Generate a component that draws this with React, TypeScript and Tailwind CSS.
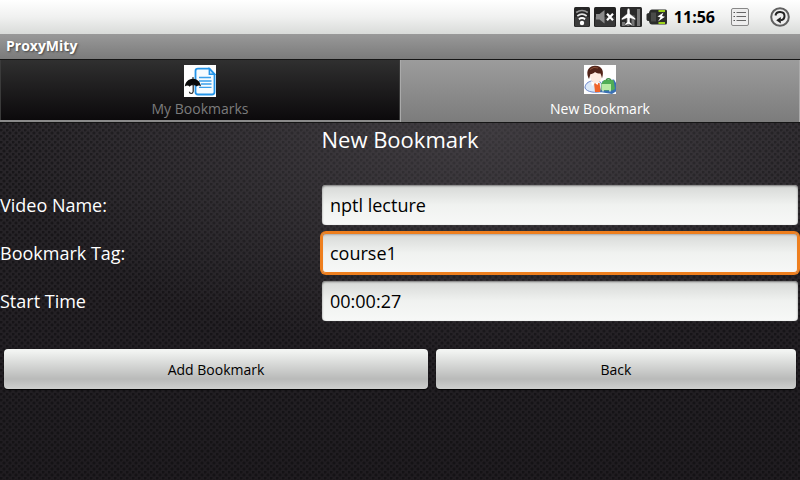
import React, { useState } from "react";

function WifiIcon() {
  return (
    <svg width="16" height="20" viewBox="0 0 16 20" aria-hidden="true">
      <rect width="16" height="20" rx="1.5" fill="#252525" />
      <path d="M1 10h14v8.500a1 1 0 0 1-1 1H2a1 1 0 0 1-1-1z" fill="#3c3c3c" />
      <path d="M2.200 5.500q5.800-4 11.600 0" fill="none" stroke="#969696" strokeWidth="1.700" />
      <path d="M3.300 8.900q4.700-3.400 9.400 0" fill="none" stroke="#e4e4e4" strokeWidth="1.800" />
      <path d="M4.900 12.200q3.100-2.400 6.200 0" fill="none" stroke="#fff" strokeWidth="1.800" />
      <circle cx="8" cy="16" r="2.200" fill="#fff" />
    </svg>
  );
}

function MuteIcon() {
  return (
    <svg width="22" height="20" viewBox="0 0 22 20" aria-hidden="true">
      <rect width="22" height="20" rx="1.500" fill="#222" />
      <path d="M1 10h20v8.500a1 1 0 0 1-1 1H2a1 1 0 0 1-1-1z" fill="#383838" />
      <path d="M2 7h3.500L10.500 3v13.500l-5-4H2z" fill="#8b8b8b" />
      <path d="M13 6.800l6 6.400M19 6.800l-6 6.400" stroke="#fff" strokeWidth="2.200" />
    </svg>
  );
}

function AirplaneIcon() {
  return (
    <svg width="22" height="20" viewBox="0 0 22 20" aria-hidden="true">
      <rect width="22" height="20" rx="1.500" fill="#2a2a2a" />
      <path d="M2 15h3v4H2zM6.500 12h3v7h-3zM11.500 8.500h3V19h-3zM17 2h3v17h-3z" fill="#777" />
      <path
        d="M8.500 1.200c1 0 1.500 1.400 1.500 3v2.600l5.500 4.400v2L10 11.200v4l2.200 1.700v1.500l-3.700-1.100-3.700 1.100v-1.500L7 15.200v-4l-5.500 2v-2L7 6.800V4.200c0-1.600.5-3 1.500-3z"
        fill="#fff"
        stroke="#2a2a2a"
        strokeWidth=".5"
      />
    </svg>
  );
}

function BatteryIcon() {
  return (
    <svg width="22" height="16" viewBox="0 0 22 16" aria-hidden="true">
      <path d="M6 .5h13.500Q21 .5 21 2v12q0 1.500-1.500 1.500H6Q3.500 15.500 3 12 .5 12 .5 10.500v-5Q.5 4 3 4 3.500.5 6 .5z" fill="#2b2d2b" />
      <path d="M5 3.500h5v9H5z" fill="#4a4c49" />
      <path d="M12.500 1h6.500v2h-6.500zM12.500 13h6.500v2h-6.500z" fill="#9ed31c" />
      <path d="M17.500 3.500L11.500 7.600l3 .9L12 12.500l7-4.700-3-.8z" fill="#fff" />
    </svg>
  );
}

function MenuIcon() {
  return (
    <svg width="18" height="18" viewBox="0 0 18 18" aria-hidden="true">
      <rect x=".5" y=".5" width="17" height="17" rx="1.500" fill="#eee" stroke="#888" />
      <path d="M5.500 4.500H15M5.500 8.500H15M5.500 12.500H15" stroke="#666" />
      <path d="M2.500 4.500h1.500M2.500 8.500h1.500M2.500 12.500h1.500" stroke="#555" />
    </svg>
  );
}

function BackIcon() {
  return (
    <svg width="20" height="20" viewBox="0 0 20 20" aria-hidden="true">
      <circle cx="10" cy="10" r="8.800" fill="#eee" stroke="#606060" strokeWidth="2" />
      <path d="M5.500 8.500C6.200 3.600 14.500 3.800 14.500 9c0 2.600-1.500 4-4 4.200" fill="none" stroke="#222" strokeWidth="2" />
      <path d="M10.800 10v6.400L6.200 13.200z" fill="#222" />
    </svg>
  );
}

function BookmarksIcon() {
  return (
    <svg width="32" height="32" viewBox="0 0 32 32" aria-hidden="true">
      <rect width="32" height="32" fill="#fff" />
      <path d="M14 3.700h11.500l5 5.300v18q0 2.500-2.500 2.500H14q-2.500 0-2.500-2.500V6q0-2.300 2.500-2.300z" fill="#f5fbff" stroke="#2394e8" strokeWidth="1.800" />
      <path d="M25.300 3.700v5.500h5.200z" fill="#b8defa" stroke="#2394e8" strokeWidth="1.400" />
      <path d="M15 12.500h12M15 16h12.500M17 19h10.500M15 22.300h12.500" stroke="#3aa0eb" strokeWidth="1.300" />
      <path d="M.8 21.500C1.500 16.500 4.500 14 8.500 13.700V12h1v1.700c4 .5 6.800 3 7.500 7.800-1.500-1.500-3-1.500-4.300 0-1-1-2-1.300-3-1.100-1.600-.4-3 .1-4 1.300-1.300-1.500-3.200-1.600-4.900-.2z" fill="#090909" />
      <path d="M9.200 19v7.500q-.3 2-2 2t-1.800-1.700" fill="none" stroke="#222" strokeWidth="1.200" />
    </svg>
  );
}

function NewBookmarkIcon() {
  return (
    <svg width="32" height="29" viewBox="0 0 32 29" aria-hidden="true">
      <rect width="32" height="29" fill="#fff" />
      <path d="M1 23c0-4 3-6.500 7-7h7c2 1 3 3 3 6v4.500C12 28 3 27.500 1 23z" fill="#dce9f8" stroke="#6884ca" />
      <path d="M10 18h5.500l1.500 9h-6z" fill="#f0652a" />
      <path d="M7 16l4 2 4-2-1.500 4L11 18l-3 3z" fill="#fff" />
      <path d="M6 9c0-5 10.500-5 11.500 0 .5 5-1.500 9-5.500 9S6 14 6 9z" fill="#fdeadf" />
      <path d="M5 14C2 9 2.500 1.500 10.500.8 18 .3 20.500 6 18 13.500c-.5-2-.8-3.500-1.500-5-2.500 0-4-.5-5.500-1.500C9.500 8.500 8 9 6.500 9z" fill="#512318" />
      <path d="M6 4.500q4-3.500 8-1.500" fill="none" stroke="#8a5139" />
      <path d="M16 27l2.500-11 11.500-1.500 2 3.500v8.500l-4 2.500z" fill="#3a70b4" />
      <path d="M17.500 18.500l2.500-3.500h9.500l1.500 9-3 1.500H17.500z" fill="#4fae55" />
      <path d="M17.500 19h9.500v6h-9.500z" fill="#b9eba5" />
      <path d="M22 15q2.500-2.500 5 0" fill="none" stroke="#3d8c48" strokeWidth="1.300" />
      <path d="M19 25v1.500M26 25v1.500" stroke="#eefae8" strokeWidth="1.300" />
    </svg>
  );
}

const tabs = [
  { name: "My Bookmarks", Icon: BookmarksIcon },
  { name: "New Bookmark", Icon: NewBookmarkIcon },
];

const initialFields = [
  { id: "video", label: "Video Name:", value: "nptl lecture" },
  { id: "tag", label: "Bookmark Tag:", value: "course1" },
  { id: "start", label: "Start Time", value: "00:00:27" },
];

export default function App() {
  const [fields, setFields] = useState(initialFields);
  const [active, setActive] = useState("tag");
  const [tab, setTab] = useState("New Bookmark");

  return (
    <div className="flex min-h-screen flex-col bg-[#1b191c] font-['Open_Sans','Noto_Sans',sans-serif] text-white">
      <header>
        <div className="flex h-[34px] items-center justify-end bg-linear-to-b from-white via-[#f0f1f0] to-[#d9dbd9] pr-2.5 text-black">
          <div className="flex items-center gap-1">
            <WifiIcon />
            <MuteIcon />
            <AirplaneIcon />
            <BatteryIcon />
          </div>
          <time className="ml-1.5 text-[16px] leading-5 font-bold">11:56</time>
          <button type="button" aria-label="Menu" className="ml-4"><MenuIcon /></button>
          <button type="button" aria-label="Go back" className="ml-[21px]"><BackIcon /></button>
        </div>
        <h1 className="flex h-[25px] items-center bg-linear-to-b from-[#999] to-[#7b7b7b] px-1.5 pb-0.5 text-[14px] font-bold text-shadow-[1px_1px_2px_#444]">
          ProxyMity
        </h1>
      </header>

      <nav className="grid h-16 grid-cols-2 border-y border-[#151515] bg-[#8a8a8a]">
        {tabs.map(({ name, Icon }) => (
          <button
            key={name}
            type="button"
            aria-pressed={tab === name}
            onClick={() => setTab(name)}
            className={
              "flex flex-col items-center justify-between pt-[5px] text-[14px] " +
              (tab === name
                ? "border-x border-[#aaa] bg-linear-to-b from-[#9c9c9c] to-[#7c7c7c] pb-[3px] text-white"
                : "mb-0.5 border-x border-[#3a3a3a] bg-linear-to-b from-[#303030] to-[#0c0a0c] pb-px text-[#7c7c7c]")
            }
          >
            <Icon />
            <span className="leading-5">{name}</span>
          </button>
        ))}
      </nav>

      <main className="grow bg-[radial-gradient(ellipse_60%_65%_at_60%_0%,#5a565b80,transparent),radial-gradient(circle_at_1px_1px,#0c0b0d90_1px,transparent_2px),radial-gradient(circle_at_4px_4px,#0c0b0d90_1px,transparent_2px),linear-gradient(#29262a,#1f1c20)] bg-size-[100%_100%,6px_6px,6px_6px,100%_100%]">
        <h2 className="text-center text-[22px] leading-8">New Bookmark</h2>
        <form onSubmit={(e) => e.preventDefault()}>
          <div className="pt-[26px]">
            {fields.map((field) => (
              <div key={field.id} className="grid h-12 grid-cols-[2fr_3fr] items-center">
                <label htmlFor={field.id} className="text-[18px]">{field.label}</label>
                <input
                  id={field.id}
                  value={field.value}
                  onFocus={() => setActive(field.id)}
                  onChange={(e) =>
                    setFields(fields.map((f) => (f.id === field.id ? { ...f, value: e.target.value } : f)))
                  }
                  className={
                    "mx-0.5 h-10 min-w-0 rounded bg-linear-to-b from-[#d6d8d6] via-[#f0f2f0] to-[#f7f8f7] px-2 text-[18px] text-black outline-none " +
                    (active === field.id
                      ? "shadow-[0_0_0_2px_#ee7f1e,inset_0_0_0_1px_#ee7f1e,inset_0_2px_2px_#aaa]"
                      : "shadow-[0_0_1px_#888,inset_0_1px_2px_#777]")
                  }
                />
              </div>
            ))}
          </div>
          <div className="grid grid-cols-[54fr_46fr] pt-6">
            <button type="submit" className="mx-1 h-10 rounded bg-linear-to-b from-[#f2f4f2] from-5% via-[#b9bab9] via-75% to-[#cecfce] text-[14px] text-black shadow-[0_1px_1px_#000]">
              Add Bookmark
            </button>
            <button type="button" className="mx-1 h-10 rounded bg-linear-to-b from-[#f2f4f2] from-5% via-[#b9bab9] via-75% to-[#cecfce] text-[14px] text-black shadow-[0_1px_1px_#000]">
              Back
            </button>
          </div>
        </form>
      </main>
    </div>
  );
}
